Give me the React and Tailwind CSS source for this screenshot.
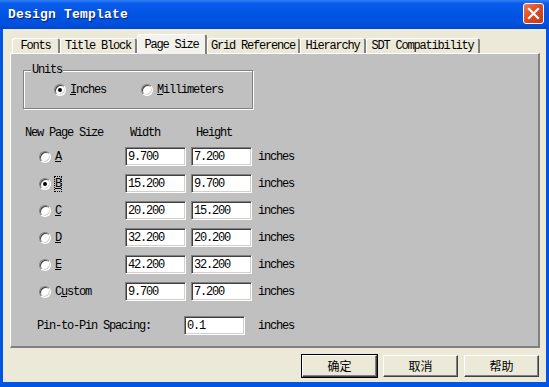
import React from "react";

const mono = "font-['Liberation_Mono','Noto_Sans_CJK_SC',monospace] text-[12px] tracking-[-1.2px] text-black";

function Radio({ checked }) {
  return (
    <span className="relative inline-flex w-[12px] h-[12px] shrink-0 rounded-full border border-t-[#808080] border-l-[#808080] border-b-white border-r-white bg-white shadow-[inset_1px_1px_0_#404040,inset_-1px_-1px_0_#d4d0c8] items-center justify-center">
      {checked && <span className="w-[4px] h-[4px] rounded-full bg-black" />}
    </span>
  );
}

function Field({ value, w = "w-[61px]" }) {
  return (
    <div
      className={`${w} h-[19px] shrink-0 bg-white border border-t-[#808080] border-l-[#808080] border-b-white border-r-white shadow-[inset_1px_1px_0_#404040,inset_-1px_-1px_0_#d4d0c8] pl-[2px] flex items-center leading-none`}
    >
      {value}
    </div>
  );
}

function Tab({ label, w, active }) {
  return (
    <div
      className={`${w} shrink-0 flex items-center justify-center rounded-t-[3px] border-t border-l border-t-white border-l-white border-r-2 border-r-[#808080] leading-none ${
        active ? "h-[20px] bg-[#f3f2ec] relative z-10 -mb-[1px]" : "h-[15px] bg-[#ece9d8]"
      }`}
    >
      {label}
    </div>
  );
}

function Btn({ children, main }) {
  return (
    <button
      type="button"
      className={`w-[75px] h-[22px] bg-[#ece9d8] font-['Noto_Sans_CJK_SC',sans-serif] text-[12px] tracking-normal text-black flex items-center justify-center border border-t-white border-l-white border-b-[#404040] border-r-[#404040] shadow-[inset_-1px_-1px_0_#808080] ${
        main ? "outline outline-1 outline-black" : ""
      }`}
    >
      {children}
    </button>
  );
}

const rows = [
  { key: "A", label: <span className="underline">A</span>, w: "9.700", h: "7.200" },
  { key: "B", label: <span className="underline outline outline-1 outline-dotted outline-black">B</span>, w: "15.200", h: "9.700", checked: true },
  { key: "C", label: <span className="underline">C</span>, w: "20.200", h: "15.200" },
  { key: "D", label: <span className="underline">D</span>, w: "32.200", h: "20.200" },
  { key: "E", label: <span className="underline">E</span>, w: "42.200", h: "32.200" },
  {
    key: "Custom",
    label: (
      <span>
        C<span className="underline">u</span>stom
      </span>
    ),
    w: "9.700",
    h: "7.200",
  },
];

export default function App() {
  return (
    <div className={`w-[549px] h-[387px] bg-[#0055e5] flex flex-col ${mono}`}>
      {/* title bar */}
      <div className="h-[29px] shrink-0 flex items-center justify-between pl-[8px] pr-[5px] bg-[linear-gradient(to_bottom,#2f7ff5_0%,#0a5ce9_12%,#0055e5_50%,#0050dd_85%,#0047cc_100%)]">
        <span className="text-white font-bold text-[13px] tracking-[0.2px] [text-shadow:1px_1px_0_#0a1e6e]">
          Design Template
        </span>
        <div className="w-[21px] h-[21px] -mt-[3px] rounded-[3px] border border-white bg-[linear-gradient(135deg,#ec7a55_0%,#dc4a22_50%,#c23a14_100%)] flex items-center justify-center">
          <svg width="13" height="13" viewBox="0 0 13 13">
            <path d="M2 2 L11 11 M11 2 L2 11" stroke="white" strokeWidth="2.2" strokeLinecap="square" />
          </svg>
        </div>
      </div>

      {/* body */}
      <div className="flex-1 mx-[3px] mb-[5px] bg-[#ece9d8] flex flex-col pl-[7px] pr-[6px] pt-[6px]">
        {/* tabs */}
        <div className="h-[18px] flex items-end pl-[2px]">
          <Tab label="Fonts" w="w-[48px]" />
          <Tab label="Title Block" w="w-[77px]" />
          <Tab label="Page Size" w="w-[70px]" active />
          <Tab label="Grid Reference" w="w-[93px]" />
          <Tab label="Hierarchy" w="w-[66px]" />
          <Tab label="SDT Compatibility" w="w-[114px]" />
        </div>

        {/* panel */}
        <div className="h-[295px] w-[530px] bg-[#c0c0c0] border-t border-l border-t-white border-l-white border-r-2 border-b-2 border-r-[#808080] border-b-[#808080] flex flex-col">
          {/* units group */}
          <div className="relative mt-[16px] ml-[12px] w-[230px] h-[39px] border border-[#808080] shadow-[inset_1px_1px_0_#ffffff,1px_1px_0_#ffffff]">
            <span className="absolute -top-[8px] left-[7px] bg-[#c0c0c0] px-[1px] leading-[14px]">Units</span>
            <div className="flex items-center h-full">
              <div className="flex items-center ml-[30px] w-[87px]">
                <Radio checked />
                <span className="ml-[4px]">
                  <span className="underline">I</span>nches
                </span>
              </div>
              <div className="flex items-center">
                <Radio />
                <span className="ml-[4px]">
                  <span className="underline">M</span>illimeters
                </span>
              </div>
            </div>
          </div>

          {/* header */}
          <div className="mt-[17px] h-[14px] leading-[14px] flex pl-[14px]">
            <span className="w-[105px]">New Page Size</span>
            <span className="w-[66px]">Width</span>
            <span>Height</span>
          </div>

          {/* rows */}
          <div className="mt-[7px] flex flex-col gap-[8px]">
            {rows.map((r) => (
              <div key={r.key} className="h-[19px] flex items-center pl-[28px]">
                <Radio checked={r.checked} />
                <span className="ml-[4px] w-[70px]">{r.label}</span>
                <Field value={r.w} />
                <span className="w-[5px]" />
                <Field value={r.h} />
                <span className="ml-[6px]">inches</span>
              </div>
            ))}
          </div>

          {/* pin spacing */}
          <div className="mt-[15px] h-[19px] flex items-center pl-[26px]">
            <span className="w-[147px]">Pin-to-Pin Spacing:</span>
            <Field value="0.1" />
            <span className="ml-[13px]">inches</span>
          </div>
        </div>

        {/* buttons */}
        <div className="mt-[7px] flex justify-end gap-[6px] pr-[1px]">
          <Btn main>确定</Btn>
          <Btn>取消</Btn>
          <Btn>帮助</Btn>
        </div>
      </div>
    </div>
  );
}
